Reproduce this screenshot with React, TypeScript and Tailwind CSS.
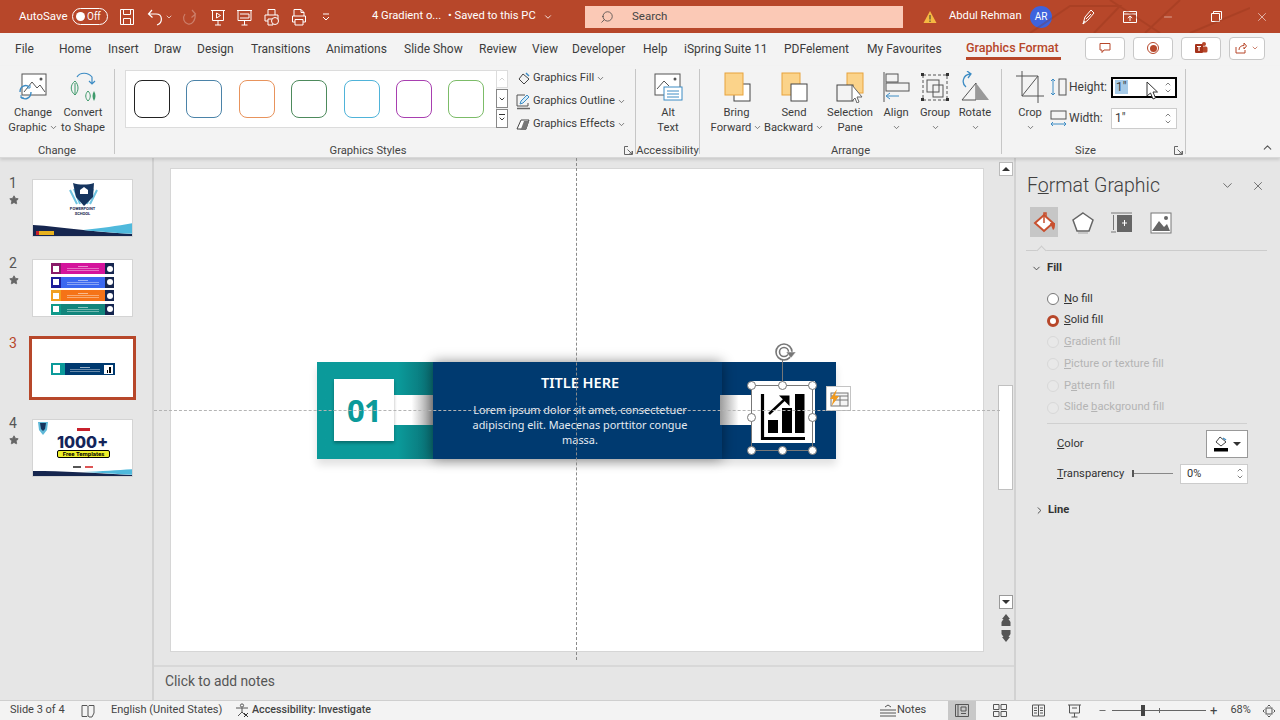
import type { ReactNode } from "react";
import { ChevronDown, ChevronRight, ChevronUp, X, Search, Minus, Star } from "lucide-react";

const tabs = [
  ["File", "w-[44px]"],
  ["Home", "w-[49px]"],
  ["Insert", "w-[46px]"],
  ["Draw", "w-[43px]"],
  ["Design", "w-[54px]"],
  ["Transitions", "w-[75px]"],
  ["Animations", "w-[78px]"],
  ["Slide Show", "w-[75px]"],
  ["Review", "w-[53px]"],
  ["View", "w-[40px]"],
  ["Developer", "w-[71px]"],
  ["Help", "w-[41px]"],
  ["iSpring Suite 11", "w-[100px]"],
  ["PDFelement", "w-[83px]"],
  ["My Favourites", "w-[99px]"],
];

const styleColors = [
  "border-[#222222]",
  "border-[#4b83a8]",
  "border-[#e8935c]",
  "border-[#4d8a5c]",
  "border-[#4fb3d9]",
  "border-[#a83fb0]",
  "border-[#7cbc68]",
];

const Ico = ({ w = 24, h = 24, children, className = "" }: { w?: number; h?: number; children: ReactNode; className?: string }) => (
  <svg width={w} height={h} viewBox={`0 0 ${w} ${h}`} fill="none" className={`shrink-0 ${className}`}>
    {children}
  </svg>
);

const Caret = ({ className = "" }: { className?: string }) => (
  <ChevronDown size={9} strokeWidth={2} className={`inline shrink-0 text-[#555] ${className}`} />
);

const BigButton = ({ w, icon, one, two, caret }: { w: string; icon: ReactNode; one: string; two?: string; caret?: boolean }) => (
  <div className={`${w} shrink-0 flex flex-col items-center`}>
    <div className="h-[36px] flex items-center justify-center">{icon}</div>
    <div className="leading-[15px] text-center whitespace-nowrap">{one}</div>
    <div className="leading-[15px] flex items-center justify-center gap-[2px] whitespace-nowrap h-[15px]">
      {two}
      {caret && <Caret />}
    </div>
  </div>
);

const Group = ({ w, label, labelPad = "", children }: { w: string; label: string; labelPad?: string; children: ReactNode }) => (
  <div className={`${w} shrink-0 relative h-full border-r border-[#c6c6c6]`}>
    {children}
    <div className={`absolute -bottom-[4px] left-0 right-0 text-center text-[11.2px] leading-[14px] text-[#444] ${labelPad}`}>{label}</div>
  </div>
);

const Spin = () => (
  <div className="flex flex-col items-center text-[#444] -space-y-[1px]">
    <ChevronUp size={8} strokeWidth={2} />
    <ChevronDown size={8} strokeWidth={2} />
  </div>
);

const MenuRow = ({ icon, label }: { icon: ReactNode; label: string }) => (
  <div className="flex items-center h-[23px] whitespace-nowrap">
    <div className="w-[17px] flex justify-center">{icon}</div>
    <span className="ml-[1px]">{label}</span>
    <Caret className="ml-[2px]" />
  </div>
);

const Radio = ({ label, ul, after, on, off }: { label?: string; ul: string; after: string; on?: boolean; off?: boolean }) => (
  <div className={`flex items-center h-[21.8px] ${off ? "text-[#b4b4b4]" : "text-[#333]"}`}>
    {on ? (
      <div className="w-[12px] h-[12px] rounded-full border-[3px] border-[#b7472a] bg-white shrink-0" />
    ) : (
      <div className={`w-[12px] h-[12px] rounded-full border shrink-0 ${off ? "border-[#d8d8d8] bg-[#e8e8e8]" : "border-[#777] bg-white"}`} />
    )}
    <span className="ml-[5px] whitespace-nowrap">
      {label}
      <u>{ul}</u>
      {after}
    </span>
  </div>
);

const Handle = ({ className }: { className: string }) => (
  <div className={`absolute w-[9px] h-[9px] rounded-full bg-white border border-[#777] ${className}`} />
);

const Thumb = ({ n, active, star = true, children }: { n: number; active?: boolean; star?: boolean; children: ReactNode }) => (
  <div className="h-[80px] pt-[21px] flex">
    <div className="w-[32px] pl-[9px]">
      <div className={`text-[14px] leading-[14px] -mt-[3px] ${active ? "text-[#b7472a]" : "text-[#555]"}`}>{n}</div>
      {star && <Star size={10} className="mt-[5px] fill-[#666] text-[#666]" />}
    </div>
    <div className={`w-[101px] h-[58px] bg-white relative overflow-hidden ${active ? "outline-[3px] outline-[#b7472a]" : "border border-[#d4d4d4]"}`}>
      {children}
    </div>
  </div>
);

const Wave = () => (
  <svg width="101" height="13" viewBox="0 0 101 13" className="absolute left-0 bottom-0">
    <path d="M0 2 C30 4 60 9 101 11 V13 H0 Z" fill="#16264f" />
    <path d="M50 7 C70 5 85 3 101 0 V11 C85 10 70 9 50 7 Z" fill="#4fb9dc" />
  </svg>
);

const ThinWave = () => (
  <svg width="101" height="7" viewBox="0 0 101 7" className="absolute left-0 bottom-0">
    <path d="M0 2 C30 2 60 4 101 6 V7 H0 Z" fill="#16264f" />
    <path d="M50 3 C70 2 85 1 101 0 V6 C85 5 70 4 50 3 Z" fill="#4fb9dc" />
  </svg>
);

const MiniBar = ({ color, edge }: { color: string; edge: string }) => (
  <div className="h-[11px] w-[63px] flex" style={{ backgroundColor: color }}>
    <div className="w-[10px] h-full flex items-center" style={{ backgroundColor: edge }}>
      <div className="w-[6px] h-[6px] bg-white ml-[2px]" />
    </div>
    <div className="flex-1 flex flex-col items-center justify-center gap-[1px]">
      <div className="w-[10px] h-px bg-white/50" />
      <div className="w-[32px] h-px bg-white/40" />
      <div className="w-[32px] h-px bg-white/40" />
    </div>
    <div className="w-[9px] h-full bg-[#16264f] flex items-center">
      <div className="w-[6px] h-[6px] bg-white ml-[2px] rounded-full" />
    </div>
  </div>
);

const ChartIcon = () => (
  <svg width="46" height="46" viewBox="0 0 46 46">
    <path d="M2.5 0 V44.5 H45" stroke="#000" strokeWidth="3.2" fill="none" />
    <rect x="8" y="26" width="10" height="13" fill="#000" />
    <rect x="22" y="14" width="10" height="25" fill="#000" />
    <rect x="35" y="0" width="9.5" height="39" fill="#000" />
    <path d="M9 20 L25 5" stroke="#000" strokeWidth="2.4" />
    <path d="M19 1.5 H29.5 V12 Z" fill="#000" />
  </svg>
);

const Cursor = () => (
  <Ico w={14} h={20}>
    <path d="M2 1 V15 L5.5 12 L8 18 L10.5 17 L8 11 H12.5 Z" fill="#fff" stroke="#333" strokeWidth="1" />
  </Ico>
);

export default function App() {
  return (
    <div className="w-[1280px] h-[720px] overflow-hidden flex flex-col bg-[#e6e6e6] font-['Roboto',sans-serif] text-[12px] text-[#3c3c3c]">
      {/* title bar */}
      <div className="h-[33px] shrink-0 bg-[#b7472a] text-white flex items-center relative">
        <svg width="240" height="33" viewBox="0 0 240 33" className="absolute left-[1010px] top-0 opacity-30">
          <path d="M20 33 L60 6 H110 L84 33 M100 0 L150 33 M170 0 L135 33 M180 33 L240 8" stroke="#8f3219" strokeWidth="2" fill="none" />
        </svg>
        <span className="ml-[19px] w-[48px] whitespace-nowrap text-[11.5px]">AutoSave</span>
        <div className="ml-[5px] w-[36px] h-[17px] rounded-full border border-white flex items-center pl-[3px] shrink-0">
          <div className="w-[9px] h-[9px] rounded-full bg-white" />
          <span className="ml-[2px] text-[10px] leading-none">Off</span>
        </div>
        <Ico w={16} h={18} className="ml-[11px]">
          <path d="M1.5 1.5 H14.5 V16.5 H1.5 Z M4.5 1.5 V6.5 H11.5 V1.5 M4.5 16.5 V10.5 H11.5 V16.5" stroke="#fff" />
        </Ico>
        <Ico w={16} h={18} className="ml-[12px]">
          <path d="M5 2 L1.5 6 L5.5 9.5 M2 6 H9 C16 6 16 15 10 17" stroke="#fff" strokeWidth="1.2" />
        </Ico>
        <ChevronDown size={8} strokeWidth={2} className="ml-[2px] shrink-0" />
        <Ico w={16} h={18} className="ml-[8px] opacity-30">
          <path d="M11 2 L14.5 6 L10.5 9.5 M14 6 C15 12 11 17 7 16 C3 15 1 10 4 6" stroke="#fff" strokeWidth="1.2" />
        </Ico>
        <Ico w={16} h={18} className="ml-[13px]">
          <path d="M1 2.5 H15 M2.5 2.5 V12.5 H13.5 V2.5 M8 12.5 V17 M5 17 H11" stroke="#fff" />
          <path d="M6.5 5 L10.5 7.5 L6.5 10 Z" stroke="#fff" />
        </Ico>
        <Ico w={17} h={18} className="ml-[10px]">
          <path d="M1 2.5 H16 M2 2.5 V12.5 H15 V2.5 M8.5 12.5 V17 M5.5 17 H11.5 M4 6 H13 V10 H4" stroke="#fff" />
        </Ico>
        <Ico w={17} h={18} className="ml-[10px]">
          <path d="M5 7 V1.5 H12 V7 M2 7 H15 V13 H12 M2 7 V13 H5 M5 11 H10 V17 H5 Z" stroke="#fff" />
          <circle cx="12" cy="13" r="3.5" fill="#b7472a" stroke="#fff" />
        </Ico>
        <Ico w={16} h={18} className="ml-[11px]">
          <path d="M3 8 V1.5 H10 L13 4.5 V8 M10 1.5 V4.5 H13 M1.5 8 H14.5 V14 H12 M1.5 8 V14 H4 M4 11.5 H12 V17 H4 Z" stroke="#fff" />
        </Ico>
        <Ico w={10} h={10} className="ml-[14px]">
          <path d="M2 2 H8 M2 5 L5 8 L8 5" stroke="#fff" />
        </Ico>
        <span className="ml-[41px] w-[76px] whitespace-nowrap text-[11.2px]">4 Gradient o...</span>
        <span className="w-[95px] whitespace-nowrap text-[11.2px]">• Saved to this PC</span>
        <ChevronDown size={10} className="shrink-0" />
        <div className="ml-[32px] w-[318px] h-[22px] bg-[#fbc9b6] text-[#444] flex items-center pl-[15px] shrink-0">
          <Search size={14} strokeWidth={1.3} className="-scale-x-100" />
          <span className="ml-[18px] text-[11.5px]">Search</span>
        </div>
        <Ico w={14} h={14} className="ml-[20px]">
          <path d="M7 1 L13.5 13 H0.5 Z" fill="#f5b942" />
          <path d="M7 5 V9.5 M7 10.5 V12" stroke="#333" />
        </Ico>
        <span className="ml-[12px] w-[82px] whitespace-nowrap text-[11.2px]">Abdul Rehman</span>
        <div className="-ml-[1px] w-[22px] h-[22px] rounded-full bg-[#3e63dd] flex items-center justify-center text-[10px] shrink-0">AR</div>
        <Ico w={16} h={18} className="ml-[28px]">
          <path d="M3 16 L5 9 L11 2 L14 5 L8 12 Z M11 6 L6 11 M3 16 L5 13" stroke="#fff" />
        </Ico>
        <Ico w={14} h={12} className="ml-[27px]">
          <path d="M0.5 0.5 H13.5 V11.5 H0.5 Z M0.5 3 H13.5 M7 10 V5 M4.8 7 L7 5 L9.2 7" stroke="#fff" />
        </Ico>
        <Minus size={12} strokeWidth={1} className="ml-[25px] shrink-0" />
        <Ico w={11} h={11} className="ml-[37px]">
          <path d="M2.5 2.5 V0.5 H10.5 V8.5 H8.5 M0.5 2.5 H8.5 V10.5 H0.5 Z" stroke="#fff" />
        </Ico>
        <X size={14} strokeWidth={1} className="ml-[33px] shrink-0" />
      </div>

      {/* tab row */}
      <div className="h-[33px] shrink-0 bg-[#f3f3f3] flex items-center pl-[15px] pb-[2px] relative">
        {tabs.map(([t, w]) => (
          <div key={t} className={`${w} shrink-0 whitespace-nowrap`}>
            {t}
          </div>
        ))}
        <div className="w-[98px] shrink-0 relative whitespace-nowrap font-medium text-[12.5px] text-[#b7472a]">
          Graphics Format
          <div className="absolute left-0 right-[3px] top-[18px] h-[3px] bg-[#b7472a]" />
        </div>
        <div className="ml-[21px] flex gap-[8px] -mt-[1px]">
          <div className="w-[40px] h-[23px] bg-white border border-[#c8c8c8] rounded-[4px] flex items-center justify-center">
            <Ico w={12} h={12}>
              <path d="M1 1.5 H11 V8 H5 L3 10.5 V8 H1 Z" stroke="#b7472a" />
            </Ico>
          </div>
          <div className="w-[40px] h-[23px] bg-white border border-[#c8c8c8] rounded-[4px] flex items-center justify-center">
            <div className="w-[12px] h-[12px] rounded-full border border-[#b7472a] flex items-center justify-center">
              <div className="w-[7px] h-[7px] rounded-full bg-[#b7472a]" />
            </div>
          </div>
          <div className="w-[40px] h-[23px] bg-white border border-[#c8c8c8] rounded-[4px] flex items-center justify-center">
            <Ico w={14} h={14}>
              <circle cx="10" cy="3" r="2" fill="#b7472a" />
              <rect x="8" y="5.5" width="5.5" height="6" rx="1.5" fill="#b7472a" />
              <rect x="1" y="3" width="8" height="9" rx="1" fill="#a5321a" />
              <path d="M3 5.5 H7 M5 5.5 V10" stroke="#fff" strokeWidth="1.2" />
            </Ico>
          </div>
          <div className="w-[36px] h-[23px] bg-white border border-[#c8c8c8] rounded-[4px] flex items-center justify-center gap-[4px]">
            <Ico w={12} h={12}>
              <path d="M1 5 V11 H10 V8 M4 8 C4 5 6 3.5 9 3.5 V1 L11.5 4 L9 7 V5" stroke="#b7472a" />
            </Ico>
            <ChevronDown size={8} className="text-[#b7472a]" />
          </div>
        </div>
      </div>

      {/* ribbon */}
      <div className="h-[92px] shrink-0 bg-[#f3f3f3] flex pb-[3px] pt-[3px] border-b border-[#d8d8d8] shadow-[0_2px_3px_rgba(0,0,0,0.12)] relative z-10 text-[11.2px]">
        <Group w="w-[115px]" label="Change">
          <div className="flex pl-[8px]">
            <BigButton
              w="w-[50px]"
              one="Change"
              two="Graphic"
              caret
              icon={
                <Ico w={30} h={30}>
                  <rect x="4" y="2" width="24" height="21" stroke="#555" fill="#fff" />
                  <path d="M6 20 L14 10 L19 16 L22 13 L27 20" stroke="#555" />
                  <circle cx="23" cy="7" r="1.5" fill="#555" />
                  <path d="M2 20 C2 14 8 12 11 15 M13 20 C13 26 7 29 3 25" stroke="#3d8cc4" strokeWidth="1.4" />
                  <path d="M9 16 H12 V13 M3 23 V26 H6" stroke="#3d8cc4" />
                </Ico>
              }
            />
            <BigButton
              w="w-[50px]"
              one="Convert"
              two="to Shape"
              icon={
                <Ico w={30} h={32}>
                  <path d="M7 10 C2 14 2 20 7 24 C11 20 11 14 7 10 Z M7 12 V24" stroke="#3f9a6b" />
                  <path d="M20 20 C17 23 17 27 20 30 C23 27 23 23 20 20 Z" stroke="#3f9a6b" />
                  <path d="M26 20 C24 23 24 27 26 30 C28 27 28 23 26 20 Z" fill="#3f9a6b" />
                  <path d="M9 6 C12 1 20 1 24 6 V13 M21 10 L24 13 L27 10" stroke="#3d8cc4" strokeWidth="1.2" />
                </Ico>
              }
            />
          </div>
        </Group>
        <Group w="w-[521px]" label="Graphics Styles" labelPad="pr-[14px]">
          <div className="flex pl-[10px] pt-[1px]">
            <div className="w-[372px] h-[58px] bg-white border border-[#dcdcdc] flex items-center gap-[16.4px] pl-[8px] shrink-0">
              {styleColors.map((c) => (
                <div key={c} className={`w-[36px] h-[38px] rounded-[8px] border-[1.5px] ${c} shrink-0`} />
              ))}
            </div>
            <div className="w-[12px] shrink-0 flex flex-col -ml-[1px] h-[58px] justify-between">
              <div className="h-[18px] bg-white border border-[#dcdcdc] flex items-center justify-center">
                <ChevronUp size={8} className="text-[#bbb]" />
              </div>
              <div className="h-[19px] bg-white border border-[#888] flex items-center justify-center">
                <ChevronDown size={8} strokeWidth={3} />
              </div>
              <div className="h-[19px] bg-white border border-[#888] flex flex-col items-center justify-center">
                <div className="w-[6px] h-[1px] bg-[#333]" />
                <ChevronDown size={8} strokeWidth={3} />
              </div>
            </div>
            <div className="ml-[7px] -mt-[3px]">
              <MenuRow
                label="Graphics Fill"
                icon={
                  <Ico w={14} h={14}>
                    <path d="M6 2 L12 7 L7 12 L2 7 Z" stroke="#444" />
                    <path d="M9 1 L12 4" stroke="#3d8cc4" strokeWidth="1.5" />
                  </Ico>
                }
              />
              <MenuRow
                label="Graphics Outline"
                icon={
                  <Ico w={15} h={16}>
                    <path d="M1 1 H9 M1 1 V12 H12 V9" stroke="#555" />
                    <path d="M4 10 L5 7 L11 1 L13 3 L7 9 Z" stroke="#3d8cc4" fill="#d5ebf8" />
                    <path d="M1 14.5 H14" stroke="#666" strokeWidth="1.5" />
                  </Ico>
                }
              />
              <MenuRow
                label="Graphics Effects"
                icon={
                  <Ico w={15} h={14}>
                    <path d="M1 11 L5 2 H13 L10 11 Z" stroke="#444" fill="#fff" />
                    <path d="M5 11 L8 3 H13 L10 12 H3" fill="#777" />
                  </Ico>
                }
              />
            </div>
          </div>
          <Ico w={9} h={9} className="absolute right-[2px] -bottom-[1px]">
            <path d="M0.5 0.5 H4 M0.5 0.5 V8.5 H8.5 V5 M3.5 3.5 L8 8 M8 5 V8 H5" stroke="#666" />
          </Ico>
        </Group>
        <Group w="w-[64px]" label="Accessibility">
          <BigButton
            w="w-[64px]"
            one="Alt"
            two="Text"
            icon={
              <Ico w={30} h={30}>
                <rect x="2" y="2" width="25" height="21" stroke="#555" fill="#fff" />
                <path d="M4 17 L11 9 L16 14" stroke="#555" />
                <circle cx="22" cy="7" r="1.5" fill="#555" />
                <rect x="11" y="15" width="18" height="13" stroke="#3d8cc4" fill="#fff" />
                <path d="M14 19 H26 M14 22 H26 M14 25 H26" stroke="#3d8cc4" />
              </Ico>
            }
          />
        </Group>
        <Group w="w-[302px]" label="Arrange">
          <div className="flex pl-[8px]">
            <BigButton
              w="w-[57px]"
              one="Bring"
              two="Forward"
              caret
              icon={
                <Ico w={30} h={32}>
                  <rect x="12" y="13" width="16" height="17" stroke="#444" fill="#fff" />
                  <rect x="3" y="2" width="18" height="22" fill="#fbd38a" stroke="#e8a33d" />
                </Ico>
              }
            />
            <BigButton
              w="w-[58px]"
              one="Send"
              two="Backward"
              caret
              icon={
                <Ico w={30} h={32}>
                  <rect x="3" y="2" width="18" height="22" fill="#fbd38a" stroke="#e8a33d" />
                  <rect x="12" y="13" width="16" height="17" stroke="#444" fill="#fff" />
                </Ico>
              }
            />
            <BigButton
              w="w-[54px]"
              one="Selection"
              two="Pane"
              icon={
                <Ico w={30} h={32}>
                  <rect x="12" y="2" width="16" height="20" fill="#fbd38a" stroke="#e8a33d" />
                  <rect x="2" y="14" width="16" height="16" stroke="#444" fill="#f3f3f3" />
                  <path d="M17 14 V30 L20 27 L22 32 L24 31 L22 26 H27 Z" fill="#fff" stroke="#666" />
                </Ico>
              }
            />
            <BigButton
              w="w-[38px]"
              one="Align"
              two=""
              caret
              icon={
                <Ico w={30} h={32}>
                  <path d="M3 1 V31" stroke="#555" />
                  <rect x="5" y="3" width="12" height="8" stroke="#555" />
                  <rect x="5" y="12" width="23" height="8" stroke="#555" />
                  <path d="M18 25 H6 M9 22 L5 25 L9 28" stroke="#3d8cc4" />
                </Ico>
              }
            />
            <BigButton
              w="w-[40px]"
              one="Group"
              two=""
              caret
              icon={
                <Ico w={30} h={32}>
                  <rect x="3" y="4" width="24" height="25" stroke="#555" strokeDasharray="3 2" />
                  <rect x="7" y="9" width="12" height="12" stroke="#555" />
                  <rect x="13" y="14" width="10" height="12" stroke="#555" />
                  <path d="M1 2 H4 V5 H1 Z M26 2 H29 V5 H26 Z M1 27 H4 V30 H1 Z M26 27 H29 V30 H26 Z" fill="#333" />
                </Ico>
              }
            />
            <BigButton
              w="w-[40px]"
              one="Rotate"
              two=""
              caret
              icon={
                <Ico w={30} h={32}>
                  <path d="M2 29 L16 12 V29 Z" stroke="#555" />
                  <path d="M16 12 L29 29 H16 Z" fill="#999" />
                  <path d="M10 3 C3 4 1 12 6 16 M7 0 L11 3 L8 7" stroke="#3d8cc4" strokeWidth="1.3" />
                </Ico>
              }
            />
          </div>
        </Group>
        <Group w="w-[184px]" label="Size" labelPad="pr-[16px]">
          <div className="flex pl-[11px]">
            <BigButton
              w="w-[34px]"
              one="Crop"
              two=""
              caret
              icon={
                <Ico w={28} h={32}>
                  <path d="M6 0 V25 H28 M0 5 H22 V32 M6 25 L22 5" stroke="#555" />
                </Ico>
              }
            />
            <div className="ml-[3px] pt-[5px] text-[12px]">
              <div className="flex items-center h-[26px]">
                <Ico w={17} h={18}>
                  <path d="M3 1 V17 M1 3 L3 1 L5 3 M1 15 L3 17 L5 15" stroke="#3d8cc4" />
                  <rect x="9" y="1" width="7" height="16" stroke="#555" />
                </Ico>
                <span className="ml-[2px] w-[42px]">Height:</span>
                <div className="w-[66px] h-[21px] bg-white border-2 border-black flex items-center pl-[2px] pr-[3px] justify-between relative">
                  <span className="bg-[#a7cbe8] leading-[14px] px-[1px]">1"</span>
                  <Spin />
                  <div className="absolute left-[32px] top-[2px]">
                    <Cursor />
                  </div>
                </div>
              </div>
              <div className="flex items-center h-[26px] mt-[5px]">
                <Ico w={17} h={18}>
                  <rect x="1" y="2" width="15" height="8" stroke="#555" />
                  <path d="M1 15 H16 M3 13 L1 15 L3 17 M14 13 L16 15 L14 17" stroke="#3d8cc4" />
                </Ico>
                <span className="ml-[2px] w-[42px]">Width:</span>
                <div className="w-[66px] h-[21px] bg-white border border-[#ccc] flex items-center pl-[3px] pr-[4px] justify-between">
                  <span>1"</span>
                  <Spin />
                </div>
              </div>
            </div>
          </div>
          <Ico w={9} h={9} className="absolute right-[2px] -bottom-[1px]">
            <path d="M0.5 0.5 H4 M0.5 0.5 V8.5 H8.5 V5 M3.5 3.5 L8 8 M8 5 V8 H5" stroke="#666" />
          </Ico>
        </Group>
        <div className="flex-1 relative">
          <ChevronUp size={13} className="absolute right-[6px] bottom-[0px] text-[#555]" />
        </div>
      </div>

      {/* main */}
      <div className="flex-1 flex min-h-0">
        {/* thumbnails */}
        <div className="w-[154px] shrink-0 border-r-[2px] border-[#d2d2d2]">
          <Thumb n={1}>
            <svg width="101" height="40" viewBox="0 0 101 40" className="absolute left-0 top-0">
              <path d="M37 10 L44 24 M41 9 L47 24 M64 10 L57 24 M60 9 L54 24" stroke="#6ec3e0" strokeWidth="2" />
              <path d="M40 3 C46 5 55 5 61 3 L60 17 L51 26 L43 17 Z" fill="#16355f" />
              <path d="M47 10 L51 7 L55 10 V14 H47 Z" fill="#fff" />
            </svg>
            <div className="absolute top-[26px] left-0 right-0 text-center text-[4px] leading-[5px] font-bold text-[#16264f]">
              POWERPOINT
              <br />
              SCHOOL
            </div>
            <Wave />
            <div className="absolute left-[3px] bottom-[1px] w-[18px] h-[4px] bg-[#e8b21e] border-l-[3px] border-[#c8202c]" />
          </Thumb>
          <Thumb n={2}>
            <div className="flex flex-col items-center pt-[3px] gap-[2.5px]">
              <MiniBar color="#d4149c" edge="#8a1a6a" />
              <MiniBar color="#3a68f0" edge="#1c1c9a" />
              <MiniBar color="#f57317" edge="#f0a020" />
              <MiniBar color="#12857c" edge="#0f9a8a" />
            </div>
          </Thumb>
          <Thumb n={3} active star={false}>
            <div className="absolute left-[19px] top-[24px] w-[64px] h-[12px] flex bg-[#003a70]">
              <div className="w-[14px] h-full bg-[#0b9a9a] flex items-center pl-[2px]">
                <div className="w-[7px] h-[8px] bg-white" />
              </div>
              <div className="flex-1 flex flex-col items-center justify-center gap-[1px]">
                <div className="w-[10px] h-px bg-white/60" />
                <div className="w-[30px] h-px bg-white/40" />
                <div className="w-[30px] h-px bg-white/40" />
              </div>
              <div className="w-[9px] h-[9px] bg-white mt-[1.5px] mr-[2px] flex items-end justify-center gap-[1px] pb-[1px]">
                <div className="w-[1.5px] h-[3px] bg-black" />
                <div className="w-[1.5px] h-[6px] bg-black" />
              </div>
            </div>
          </Thumb>
          <Thumb n={4}>
            <svg width="14" height="16" viewBox="0 0 14 16" className="absolute left-[3px] top-[1px]">
              <path d="M2 1 H12 L11 9 L7 14 L3 9 Z" fill="#5fb8d8" />
              <path d="M4 2 H10 L9 8 L7 10 L5 8 Z" fill="#16355f" />
            </svg>
            <div className="absolute top-[12px] left-0 right-0 text-center font-['Inter'] text-[16px] leading-[20px] font-extrabold text-[#14245a]">1000+</div>
            <div className="absolute top-[30px] left-[24px] w-[53px] h-[8px] rounded-[2px] bg-[#eef02a] border border-black text-[6px] leading-[6px] text-center font-bold text-black whitespace-nowrap">
              Free Templates
            </div>
            <div className="absolute top-[8px] left-[44px] w-[13px] h-[3px] bg-[#c8202c]" />
            <div className="absolute top-[46px] left-[40px] w-[8px] h-[2px] bg-[#555]" />
            <div className="absolute top-[46px] left-[52px] w-[8px] h-[2px] bg-[#d55]" />
            <ThinWave />
          </Thumb>
        </div>

        {/* centre */}
        <div className="flex-1 flex flex-col min-w-0 relative">
          {/* guides */}
          <div className="absolute left-0 top-[252px] w-[846px] border-t border-dashed border-[#b4b4b4] z-20" />
          <div className="absolute left-[422px] top-0 h-[502px] border-l border-dashed border-[#8a8a8a] z-20" />

          <div className="h-[507px] flex pl-[16px] pt-[10px]">
            <div className="w-[814px] h-[484px] bg-white border border-[#d6d6d6] relative shrink-0">
              {/* slide objects */}
              <div className="absolute left-[146px] top-[193px] w-[519px] h-[97px] bg-[#003a70] shadow-[0_6px_8px_rgba(0,0,0,0.12)]">
                <div className="absolute left-0 top-0 w-[116px] h-full bg-gradient-to-r from-[#0b9a9a] from-[70%] to-[#0a6f74]" />
                <div className="absolute left-[77px] top-[33px] w-[39px] h-[30px] bg-gradient-to-r from-white from-[45%] to-[#9c9c9c]" />
                <div className="absolute left-[17px] top-[17px] w-[60px] h-[62px] bg-white shadow-[0_2px_3px_rgba(0,0,0,0.3)] flex items-center justify-center font-['Noto_Sans'] font-bold text-[31px] text-[#0b9a9a] tracking-tight">
                  01
                </div>
                <div className="absolute left-[116px] top-0 w-[289px] h-full pl-[5px] text-white text-center font-['Noto_Sans'] shadow-[0_0_12px_rgba(0,0,0,0.45)] bg-[#003a70]">
                  <div className="mt-[11px] text-[14.5px] leading-[18px] font-semibold">TITLE HERE</div>
                  <div className="mt-[11px] text-[10.9px] leading-[15px] text-[#e4ebf2] whitespace-nowrap">
                    Lorem ipsum dolor sit amet, consectetuer
                    <br />
                    adipiscing elit. Maecenas porttitor congue
                    <br />
                    massa.
                  </div>
                </div>
                <div className="absolute left-[403px] top-[33px] w-[34px] h-[30px] bg-gradient-to-l from-white from-[45%] to-[#9c9c9c]" />
                <div className="absolute left-[435px] top-[19px] w-[63px] h-[62px] bg-white pl-[8px] pt-[13px]">
                  <ChartIcon />
                </div>
                {/* selection */}
                <div className="absolute left-[434px] top-[23px] w-[62px] h-[66px] border border-[#777]">
                  <div className="absolute left-[30px] -top-[29px] w-px h-[29px] bg-[#777]" />
                  <Handle className="-left-[5px] -top-[5px]" />
                  <Handle className="left-[26px] -top-[5px]" />
                  <Handle className="-right-[5px] -top-[5px]" />
                  <Handle className="-left-[5px] top-[27px]" />
                  <Handle className="-right-[5px] top-[27px]" />
                  <Handle className="-left-[5px] -bottom-[5px]" />
                  <Handle className="left-[26px] -bottom-[5px]" />
                  <Handle className="-right-[5px] -bottom-[5px]" />
                </div>
                <svg width="24" height="22" viewBox="0 0 24 22" className="absolute left-[457px] -top-[20px]">
                  <circle cx="10" cy="10" r="8" stroke="#777" strokeWidth="1.6" fill="#fff" />
                  <circle cx="10" cy="10" r="4.5" stroke="#777" strokeWidth="1.6" fill="#fff" />
                  <path d="M12 10 L22 10 L17 16 Z" fill="#777" stroke="#fff" strokeWidth="0.5" />
                </svg>
                <div className="absolute left-[509px] top-[24px] w-[25px] h-[25px] bg-white border border-[#c4c4c4] flex items-center justify-center">
                  <svg width="21" height="21" viewBox="0 0 21 21">
                    <rect x="3" y="5" width="17" height="13" stroke="#777" fill="#f5f5f5" />
                    <path d="M3 8 H20 M12 8 V18 M5 12 H20" stroke="#777" />
                    <path d="M9 1 L2 11 H5.5 L3.5 18 L11 8 H7 Z" fill="#f09a1e" />
                  </svg>
                </div>
              </div>
            </div>
            {/* scrollbar */}
            <div className="ml-[14px] w-[15px] shrink-0 h-[490px] -mt-[6px] flex flex-col items-center">
              <div className="w-[14px] h-[14px] bg-white border border-[#bbb] flex items-center justify-center">
                <div className="w-0 h-0 border-x-[4px] border-x-transparent border-b-[4px] border-b-[#333]" />
              </div>
              <div className="mt-[209px] w-[15px] h-[105px] bg-white border border-[#c0c0c0]" />
              <div className="mt-[105px] w-[14px] h-[14px] bg-white border border-[#999] flex items-center justify-center">
                <div className="w-0 h-0 border-x-[4px] border-x-transparent border-t-[4px] border-t-[#333]" />
              </div>
              <Ico w={10} h={12} className="mt-[5px]">
                <path d="M5 0 L9 5 H7.5 L9.5 8 V12 H0.5 V8 L2.5 5 H1 Z" fill="#555" />
              </Ico>
              <Ico w={10} h={12} className="mt-[4px]">
                <path d="M5 12 L9 7 H7.5 L9.5 4 V0 H0.5 V4 L2.5 7 H1 Z" fill="#555" />
              </Ico>
            </div>
          </div>
          {/* notes */}
          <div className="flex-1 border-t-2 border-[#d8d8d8] flex items-center pl-[11px] pb-[4px] text-[13.8px] text-[#555]">Click to add notes</div>
        </div>

        {/* format pane */}
        <div className="w-[266px] shrink-0 border-l-[2px] border-[#d2d2d2] text-[#333] text-[11.2px] relative">
          <div className="flex items-center pl-[11px] pt-[15px] h-[40px]">
            <span className="text-[19.5px] leading-[26px] font-light text-[#404040] w-[193px] whitespace-nowrap">
              F<u>o</u>rmat Graphic
            </span>
            <ChevronDown size={15} strokeWidth={1.2} className="text-[#444]" />
            <X size={14} strokeWidth={1.2} className="ml-[16px] text-[#444]" />
          </div>
          <div className="flex items-center mt-[9px] ml-[14px] h-[30px] gap-[11px]">
            <div className="w-[28px] h-[30px] bg-[#c6c6c6] flex items-center justify-center">
              <Ico w={24} h={24}>
                <path d="M12 5 L21 13 L12 21 L3 13 Z" fill="#fff" stroke="#c8502f" strokeWidth="2" />
                <path d="M12 13 V3 H14 V6" stroke="#c8502f" strokeWidth="1.5" />
                <path d="M18 13 H23 C23 16 23 19 21 20 C20 18 19 15 18 13 Z" fill="#c8502f" />
              </Ico>
            </div>
            <Ico w={28} h={24}>
              <path d="M14 3 L24 10 L20 21 H8 L4 10 Z" fill="#fff" stroke="#666" strokeWidth="1.5" />
              <path d="M9 23 H19" stroke="#bbb" strokeWidth="1.5" />
            </Ico>
            <Ico w={28} h={24}>
              <rect x="9" y="5" width="15" height="17" fill="#666" />
              <path d="M3 3 H24 M3 22 H8 M5.5 5 V20" stroke="#777" />
              <path d="M14 13 H19 M16.5 10 V16" stroke="#fff" />
            </Ico>
            <Ico w={28} h={24}>
              <rect x="4" y="3" width="20" height="20" fill="#fff" stroke="#777" />
              <path d="M5 21 L12 11 L17 17 L20 14 L23 21 Z" fill="#666" />
              <circle cx="19" cy="8" r="2" fill="#666" />
            </Ico>
          </div>
          {/* tab rule with notch */}
          <div className="relative ml-[10px] w-[241px] mt-[13px] h-px bg-[#cccccc]">
            <div className="absolute left-[12px] -top-[3px] w-[7px] h-[7px] rotate-45 border-l border-t border-[#cccccc] bg-[#e6e6e6]" />
          </div>
          <div className="flex items-center ml-[15px] mt-[10px] h-[14px]">
            <ChevronDown size={11} className="text-[#444]" />
            <span className="ml-[5px] font-bold">Fill</span>
          </div>
          <div className="ml-[31px] mt-[13px]">
            <Radio ul="N" after="o fill" />
            <Radio ul="S" after="olid fill" on />
            <Radio ul="G" after="radient fill" off />
            <Radio ul="P" after="icture or texture fill" off />
            <Radio label="P" ul="a" after="ttern fill" off />
            <Radio label="Slide " ul="b" after="ackground fill" off />
          </div>
          <div className="ml-[31px] w-[200px] h-px bg-[#d0d0d0] mt-[4px]" />
          <div className="flex items-center ml-[41px] mt-[6px] h-[28px]">
            <span className="w-[149px] pt-[2px]">
              <u>C</u>olor
            </span>
            <div className="w-[42px] h-[28px] bg-white border border-[#999] flex items-center justify-center gap-[4px]">
              <Ico w={16} h={16}>
                <path d="M7 1 L13 6 L8 10 L3 6 Z" stroke="#444" />
                <path d="M10 2 L13 4" stroke="#3d8cc4" strokeWidth="1.5" />
                <rect x="1" y="12" width="14" height="3.5" fill="#000" />
              </Ico>
              <div className="w-0 h-0 border-x-[4px] border-x-transparent border-t-[4px] border-t-[#333]" />
            </div>
          </div>
          <div className="flex items-center ml-[41px] mt-[6px] h-[20px]">
            <span className="w-[75px] whitespace-nowrap pt-[1px]">
              <u>T</u>ransparency
            </span>
            <div className="w-[41px] flex items-center">
              <div className="w-[2px] h-[7px] bg-[#555]" />
              <div className="flex-1 h-px bg-[#888]" />
            </div>
            <div className="ml-[7px] w-[68px] h-[20px] bg-white border border-[#ccc] flex items-center justify-between pl-[6px] pr-[3px]">
              <span className="text-[11px]">0%</span>
              <Spin />
            </div>
          </div>
          <div className="flex items-center ml-[18px] mt-[20px] h-[14px]">
            <ChevronRight size={11} className="text-[#444]" />
            <span className="ml-[3px] font-bold">Line</span>
          </div>
        </div>
      </div>

      {/* status bar */}
      <div className="h-[20px] shrink-0 bg-[#f3f3f3] border-t border-[#cfcfcf] flex items-center text-[11px] text-[#444]">
        <span className="ml-[10px] w-[71px] whitespace-nowrap">Slide 3 of 4</span>
        <Ico w={14} h={14}>
          <path d="M1 1.5 H6 L7 2.5 L8 1.5 H13 V9 L11 13 H8 L7 11.5 L6 12.5 H1 Z M7 2.5 V11.5" stroke="#555" />
        </Ico>
        <span className="ml-[16px] w-[124px] whitespace-nowrap">English (United States)</span>
        <Ico w={14} h={15}>
          <circle cx="7" cy="2.5" r="1.6" stroke="#555" />
          <path d="M1 5 H13 M7 5 V9 L3 13 M7 9 L10 12" stroke="#555" />
          <path d="M9 10 L13 14 M13 10 L9 14" stroke="#333" />
        </Ico>
        <span className="ml-[3px] font-medium text-[10.7px] whitespace-nowrap w-[130px]">Accessibility: Investigate</span>
        <div className="ml-[498px] flex items-center w-[68px]">
          <Ico w={16} h={14}>
            <path d="M5 3 L8 1 L11 3 M0 6 H16 M0 9 H16 M0 12 H16" stroke="#555" />
          </Ico>
          <span className="ml-[1px]">Notes</span>
        </div>
        <div className="w-[28px] h-[19px] bg-[#c8c8c8] flex items-center justify-center shrink-0">
          <Ico w={14} h={13}>
            <path d="M0.5 0.5 H13.5 V12.5 H0.5 Z M3 0.5 V12.5 M6 3 H11 V7 H6 Z M6 9.5 H11" stroke="#555" />
          </Ico>
        </div>
        <div className="w-[48px] flex justify-center shrink-0">
          <Ico w={14} h={13}>
            <path d="M0.5 0.5 H6 V5.5 H0.5 Z M8 0.5 H13.5 V5.5 H8 Z M0.5 7.5 H6 V12.5 H0.5 Z M8 7.5 H13.5 V12.5 H8 Z" stroke="#555" />
          </Ico>
        </div>
        <div className="w-[28px] flex justify-center shrink-0">
          <Ico w={13} h={13}>
            <path d="M0.5 1 H6.5 V12 H0.5 Z M6.5 1 H12.5 V12 H6.5 Z M2 4 H5 M2 6.5 H5 M2 9 H5 M8 4 H11 M8 6.5 H11 M8 9 H11" stroke="#555" />
          </Ico>
        </div>
        <div className="w-[44px] flex justify-center shrink-0">
          <Ico w={13} h={14}>
            <path d="M0 1 H13 M1.5 1 V9 H11.5 V1 M6.5 9 V13 M3.5 13 H9.5 M4 4 H9" stroke="#555" />
          </Ico>
        </div>
        <Minus size={9} className="ml-[2px] shrink-0" />
        <div className="ml-[5px] w-[94px] h-[9px] relative flex items-center shrink-0">
          <div className="w-full h-px bg-[#666]" />
          <div className="absolute left-[29px] w-[4px] h-[11px] -top-[1px] bg-[#444]" />
          <div className="absolute left-[47px] w-px h-[5px] top-[2px] bg-[#666]" />
        </div>
        <span className="ml-[4px] text-[13px] leading-none">+</span>
        <span className="ml-[13px] w-[32px] whitespace-nowrap">68%</span>
        <Ico w={14} h={14}>
          <rect x="4" y="4" width="6" height="6" stroke="#555" />
          <path d="M7 1 L5.5 2.5 M7 1 L8.5 2.5 M7 13 L5.5 11.5 M7 13 L8.5 11.5 M1 7 L2.5 5.5 M1 7 L2.5 8.5 M13 7 L11.5 5.5 M13 7 L11.5 8.5" stroke="#555" />
        </Ico>
      </div>
    </div>
  );
}
